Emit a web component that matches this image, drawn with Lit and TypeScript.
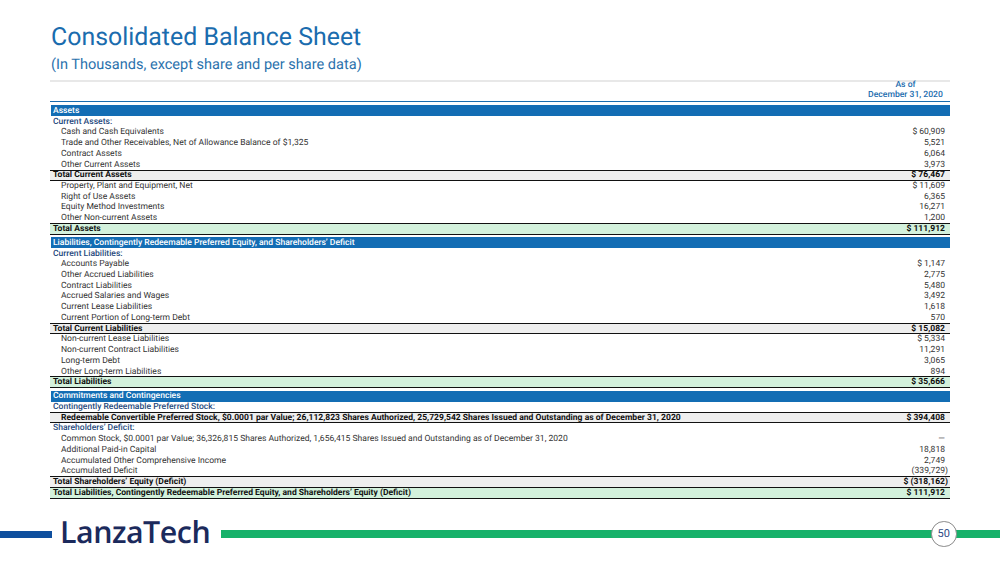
import { LitElement, html, css } from "lit";
import { customElement } from "lit/decorators.js";

type Row = { k: string; l: string; v?: string };
const rows: Row[] = [
  { k: "hdr", l: "Assets" },
  { k: "sub", l: "Current Assets:" },
  { k: "item", l: "Cash and Cash Equivalents", v: "$ 60,909" },
  { k: "item", l: "Trade and Other Receivables, Net of Allowance Balance of $1,325", v: "5,521" },
  { k: "item", l: "Contract Assets", v: "6,064" },
  { k: "item", l: "Other Current Assets", v: "3,973" },
  { k: "tot", l: "Total Current Assets", v: "$ 76,467" },
  { k: "item", l: "Property, Plant and Equipment, Net", v: "$ 11,609" },
  { k: "item", l: "Right of Use Assets", v: "6,365" },
  { k: "item", l: "Equity Method Investments", v: "16,271" },
  { k: "item", l: "Other Non-current Assets", v: "1,200" },
  { k: "grand", l: "Total Assets", v: "$ 111,912" },
  { k: "hdr gap", l: "Liabilities, Contingently Redeemable Preferred Equity, and Shareholders’ Deficit" },
  { k: "sub", l: "Current Liabilities:" },
  { k: "item", l: "Accounts Payable", v: "$ 1,147" },
  { k: "item", l: "Other Accrued Liabilities", v: "2,775" },
  { k: "item", l: "Contract Liabilities", v: "5,480" },
  { k: "item", l: "Accrued Salaries and Wages", v: "3,492" },
  { k: "item", l: "Current Lease Liabilities", v: "1,618" },
  { k: "item", l: "Current Portion of Long-term Debt", v: "570" },
  { k: "tot", l: "Total Current Liabilities", v: "$ 15,082" },
  { k: "item", l: "Non-current Lease Liabilities", v: "$ 5,334" },
  { k: "item", l: "Non-current Contract Liabilities", v: "11,291" },
  { k: "item", l: "Long-term Debt", v: "3,065" },
  { k: "item", l: "Other Long-term Liabilities", v: "894" },
  { k: "grand", l: "Total Liabilities", v: "$ 35,666" },
  { k: "hdr gap", l: "Commitments and Contingencies" },
  { k: "sub", l: "Contingently Redeemable Preferred Stock:" },
  { k: "tot ind", l: "Redeemable Convertible Preferred Stock, $0.0001 par Value; 26,112,823 Shares Authorized, 25,729,542 Shares Issued and Outstanding as of December 31, 2020", v: "$ 394,408" },
  { k: "sub", l: "Shareholders’ Deficit:" },
  { k: "item", l: "Common Stock, $0.0001 par Value; 36,326,815 Shares Authorized, 1,656,415 Shares Issued and Outstanding as of December 31, 2020", v: "—" },
  { k: "item", l: "Additional Paid-in Capital", v: "18,818" },
  { k: "item", l: "Accumulated Other Comprehensive Income", v: "2,749" },
  { k: "item paren", l: "Accumulated Deficit", v: "(339,729)" },
  { k: "tot paren", l: "Total Shareholders’ Equity (Deficit)", v: "$ (318,162)" },
  { k: "grand", l: "Total Liabilities, Contingently Redeemable Preferred Equity, and Shareholders’ Equity (Deficit)", v: "$ 111,912" },
];

@customElement("app-root")
export class AppRoot extends LitElement {
  static styles = css`
    :host { display: block; width: 1000px; height: 562px; overflow: hidden; background: #fff;
      font-family: Roboto, "Liberation Sans", sans-serif; position: relative; text-rendering: geometricPrecision; }
    .page { display: flex; flex-direction: column; height: 562px; }
    .head { padding: 23px 50px 0 51px; color: #1a6cae; }
    .title { font-size: 24.9px; line-height: 30px; height: 30px; }
    .subtitle { font-size: 14.55px; line-height: 18px; margin-top: 3px; color: #2b72ad; }
    .main { margin: 6px 50px 0 50px; border-top: 2px solid #e8e8e8; }
    .asof { color: #1a6cae; font-weight: 500; font-size: 8.6px; text-align: center; width: 81px; margin-left: auto; margin-right: 4px; }
    .asof div:first-child { line-height: 7px; height: 7px; margin-bottom: 1px; }
    .asof div:last-child { line-height: 11px; height: 11px; }
    .rule { border-top: 1px solid #1a6cae; height: 3.3px; }
    .row { display: flex; justify-content: space-between; align-items: center; height: 10.72px; line-height: 10px;
      font-size: 8.55px; color: #333; padding: 0 5px 0 3px; white-space: nowrap; box-sizing: border-box; }
    .item .l { padding-left: 8px; }
    .row.paren { padding-right: 2px; }
    .sub { color: #1f4a7d; font-weight: 500; }
    .hdr { background: #136db4; color: #fff; font-weight: 500; height: 11px; margin-left: 1px; padding-left: 2px; }
    .gap { margin-top: 3px; }
    .tot, .grand { color: #111; font-weight: 700; border-top: 1px solid #111; border-bottom: 1px solid #111;
      height: 11.52px; margin: -0.4px 0; padding-bottom: 0; }
    .tot { background: #eee; }
    .grand { background: #d3f1dc; }
    .ind .l { padding-left: 8px; }
    .footer { position: absolute; left: 0; right: 0; top: 516px; height: 36px; display: flex; align-items: center; }
    .bar-blue { width: 52px; height: 7px; background: #0e4f9e; margin-top: 1px; }
    .logo { font-family: "Open Sans", sans-serif; font-weight: 600; font-size: 30.4px; letter-spacing: -0.5px; color: #1b2a5c;
      margin-left: 8px; width: 161px; height: 36px; line-height: 36px; margin-top: -5px; }
    .bar-green { flex: 1; height: 8px; background: #17b16a; }
    .badge { position: absolute; left: 931px; top: 5px; width: 25.5px; height: 25.5px; border-radius: 50%; background: #fff;
      border: 1px solid #8a8a8a; box-sizing: border-box; display: flex; align-items: center; justify-content: center;
      font-size: 11px; color: #2d4a85; }
  `;
  render() {
    return html`<div class="page">
      <div class="head">
        <div class="title">Consolidated Balance Sheet</div>
        <div class="subtitle">(In Thousands, except share and per share data)</div>
      </div>
      <div class="main">
        <div class="asof"><div>As of</div><div>December 31, 2020</div></div>
        <div class="rule"></div>
        ${rows.map((r) => html`<div class="row ${r.k}"><span class="l">${r.l}</span><span>${r.v ?? ""}</span></div>`)}
      </div>
      <div class="footer">
        <div class="bar-blue"></div>
        <div class="logo">LanzaTech</div>
        <div class="bar-green"></div>
        <div class="badge">50</div>
      </div>
    </div>`;
  }
}
